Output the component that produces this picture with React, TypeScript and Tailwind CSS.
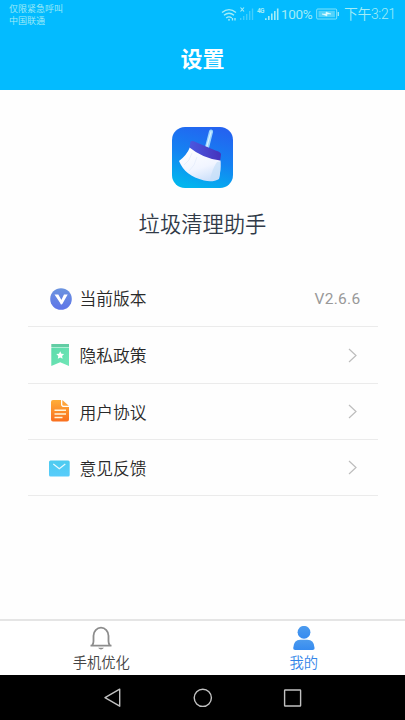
import React from "react";

const cjk = "font-['Roboto','Noto_Sans_CJK_SC',sans-serif]";

function StatusBar() {
  return (
    <div className="flex h-7 justify-between pl-[9px] pr-[9px] text-[#a4ecf6]">
      <div className="pt-[3px] text-[9px] font-[350] leading-[12px]">
        <p>仅限紧急呼叫</p>
        <p>中国联通</p>
      </div>
      <div className="flex h-7 items-center whitespace-nowrap">
        <svg width="59" height="18" viewBox="0 0 59 18" fill="none" stroke="currentColor">
          <path d="M1 7.5Q8 1.8 15 7.5M3 10.3Q8 6.2 13 10.3M5.2 13Q8 10.8 10.8 13" strokeWidth="1.4" />
          <path d="M7 14.8h2M11.5 13v2.5M14 13v2.5" strokeWidth="1.3" />
          <path d="M19.5 2.5l3.5 4M23 2.5l-3.5 4" strokeWidth="1.1" />
          <path d="M19.7 15v-2M22.7 15v-4M25.7 15V9M28.7 15V6M31.5 15V3.5" strokeWidth="1.4" opacity=".4" />
          <path d="M44.8 15v-1.8M47.8 15v-4M50.8 15V8.5M53.8 15V6M56.7 15V3.5" strokeWidth="1.6" />
          <text x="36" y="8" fontSize="6.5" fontWeight="700" fill="currentColor" stroke="none" textLength="7.5">4G</text>
        </svg>
        <span className="ml-[1px] w-[32px] text-[13.5px] tracking-[-0.3px]">100%</span>
        <svg className="ml-[3px]" width="24" height="12" viewBox="0 0 24 12" fill="none" stroke="currentColor">
          <rect x=".7" y="1" width="20" height="10" rx="1" opacity=".8" />
          <rect x="2.5" y="2.8" width="16.4" height="6.4" fill="currentColor" stroke="none" opacity=".5" />
          <path d="M22.3 4v4" strokeWidth="1.3" />
          <path d="M6 6h4V4l5 2h-4v2z" fill="#e0fcff" stroke="#e0fcff" strokeWidth=".5" />
        </svg>
        <span className="ml-[4px] w-[52px] text-[13.8px] font-[350] tracking-[-0.3px]">下午3:21</span>
      </div>
    </div>
  );
}

function BroomLogo() {
  return (
    <svg width="61" height="61" viewBox="0 0 61 61">
      <defs>
        <linearGradient id="logoBg" x1=".65" y1="0" x2=".35" y2="1">
          <stop stopColor="#2463f0" />
          <stop offset=".5" stopColor="#1482f2" />
          <stop offset="1" stopColor="#02b5ee" />
        </linearGradient>
        <linearGradient id="bristle" x1=".3" y1="0" x2=".7" y2="1">
          <stop stopColor="#ffffff" />
          <stop offset=".6" stopColor="#f1f5ff" />
          <stop offset="1" stopColor="#cbdffa" />
        </linearGradient>
        <linearGradient id="band">
          <stop stopColor="#4a58e0" />
          <stop offset="1" stopColor="#4633bb" />
        </linearGradient>
      </defs>
      <rect width="61" height="61" rx="13" fill="url(#logoBg)" />
      <path d="M37 4.2q.4-1.9 2.3-1.6t1.8 2.2L36.5 23l-4-1.2z" fill="#9bd5ff" />
      <path d="M38.6 4.2l1.2.2-4.8 16.8-1.2-.4z" fill="#d8f1ff" />
      <path d="M18 20Q15 28 7 34c4 10 12 16 25 19.5 6 1.5 11 .8 15-1.500q2-8 1.500-18.500z" fill="url(#bristle)" />
      <path d="M18.500 14.500q2-1.200 5 .5l20 8.500q5.500 1.500 5.500 4l-.8 6Q31 31.500 17.500 20.500z" fill="url(#band)" />
      <path d="M20 26q-2 8-8 12M25 30q-2 9-8 14" fill="none" stroke="#e3ebfb" strokeWidth=".7" />
      <path d="M45 35q-5 7-7 18 5 .6 9-1.500 2-8 1.500-17z" fill="#c6dff8" opacity=".7" />
    </svg>
  );
}

function VersionIcon() {
  return (
    <svg className="mt-px" width="22" height="22" viewBox="0 0 22 22">
      <defs>
        <linearGradient id="ver" x2="0" y2="1">
          <stop stopColor="#6b94df" />
          <stop offset="1" stopColor="#5e74e8" />
        </linearGradient>
      </defs>
      <circle cx="11" cy="11" r="10.8" fill="url(#ver)" />
      <path d="M4.500 6.500h3.800l3.300 5.800-.6 4zM14 6.500h3.700l-5.400 9.600q-.6.800-1.600.2l-.7-1.500z" fill="#fff" />
    </svg>
  );
}

function PrivacyIcon() {
  return (
    <svg width="22" height="24" viewBox="0 0 22 24">
      <defs>
        <linearGradient id="priv" x1="0" x2="1" y2="1">
          <stop stopColor="#5bdbab" />
          <stop offset="1" stopColor="#71e6b7" />
        </linearGradient>
      </defs>
      <path d="M1.300 1h17.700v3H1.300z" fill="#62cda4" />
      <path d="M1.300 4.400h17.700V23l-8.800-3.800L1.300 23z" fill="url(#priv)" />
      <path d="M10.200 8.300l1.200 2.400 2.700.4-2 1.900.5 2.700-2.400-1.300-2.400 1.300.5-2.700-2-1.900 2.700-.4z" fill="#fff" />
    </svg>
  );
}

function AgreementIcon() {
  return (
    <svg className="-mt-[2px]" width="22" height="24" viewBox="0 0 22 24">
      <defs>
        <linearGradient id="doc" x2="0" y2="1">
          <stop stopColor="#ffae38" />
          <stop offset="1" stopColor="#f96f1e" />
        </linearGradient>
      </defs>
      <path d="M3 1h8v4.200Q11 8 14 8h5v12.500a2 2 0 0 1-2 2H3a2 2 0 0 1-2-2V3a2 2 0 0 1 2-2z" fill="url(#doc)" />
      <path d="M12.300 1l6.500 5.800H14q-1.700 0-1.700-1.600z" fill="#ffa53c" />
      <path d="M4.500 11.300h11.500M4.500 14.900h11.500M4.500 18.500h8" stroke="#fff5d9" strokeWidth="1.500" />
    </svg>
  );
}

function FeedbackIcon() {
  return (
    <svg className="mt-px overflow-visible" width="22" height="22" viewBox="0 0 22 22">
      <defs>
        <linearGradient id="mail" x2="0" y2="1">
          <stop stopColor="#4dcbef" />
          <stop offset="1" stopColor="#58ccfb" />
        </linearGradient>
      </defs>
      <rect x="-1" y="3.500" width="20.700" height="16" rx="1.500" fill="url(#mail)" />
      <path d="M3.300 7l6 4.700L15.300 7" fill="none" stroke="#e8faff" strokeWidth="1.200" />
    </svg>
  );
}

const rows = [
  { label: "当前版本", icon: <VersionIcon />, value: "V2.6.6", height: "h-[57px]" },
  { label: "隐私政策", icon: <PrivacyIcon />, height: "h-[57px]" },
  { label: "用户协议", icon: <AgreementIcon />, height: "h-[56px]" },
  { label: "意见反馈", icon: <FeedbackIcon />, height: "h-[56px]" },
];

export default function App() {
  return (
    <div className={`flex h-[720px] w-[405px] flex-col overflow-hidden bg-[#fefefe] ${cjk}`}>
      <header className="h-[90px] shrink-0 bg-[#03bbff]">
        <StatusBar />
        <h1 className="mt-[16px] text-center text-[22px] font-bold leading-[32px] text-white">设置</h1>
      </header>

      <main className="flex flex-1 flex-col items-center">
        <div className="mt-[37px]">
          <BroomLogo />
        </div>
        <h2 className="mt-[21px] text-[21.3px] font-[350] leading-[32px] text-[#303a48]">垃圾清理助手</h2>
        <ul className="mt-[29px] w-[350px]">
          {rows.map((row) => (
            <li key={row.label} className={`flex items-center border-b border-[#ebebeb] pl-[22px] pr-[17px] ${row.height}`}>
              <span className="flex w-[30px]">{row.icon}</span>
              <span className="pt-[2px] text-[16.8px] font-[350] leading-6 text-[#292929]">{row.label}</span>
              {row.value ? (
                <span className="ml-auto pt-[3px] text-[15.5px] tracking-[0.3px] text-[#999999]">{row.value}</span>
              ) : (
                <svg className="ml-auto mr-[4px]" width="9" height="15" viewBox="0 0 9 15" fill="none" stroke="#bdbdbd" strokeWidth="1.2">
                  <path d="M1 1l7 6.5L1 14" />
                </svg>
              )}
            </li>
          ))}
        </ul>
      </main>

      <nav className="grid h-[56px] shrink-0 grid-cols-2 border-t-2 border-[#e5e5e5] bg-white text-[14.3px] font-[350] leading-[20px]">
        <div className="flex flex-col items-center pt-[5px] text-[#444444]">
          <svg width="24" height="26" viewBox="0 0 24 26" fill="none" stroke="#8c8c8c" strokeWidth="1.8">
            <path d="M1.500 19.700h21M3 19.500q1.500-1.600 1.500-4.300V9.700a7.500 8 0 0 1 15 0v5.500q0 2.700 1.500 4.300" />
            <path d="M9 21.800h6q-3 3.200-6 0z" fill="#8c8c8c" stroke="none" />
          </svg>
          <span className="mt-px">手机优化</span>
        </div>
        <div className="flex flex-col items-center pt-[5px] text-[#3385e8]">
          <svg width="24" height="26" viewBox="0 0 24 26">
            <defs>
              <linearGradient id="user" x2="0" y2="1">
                <stop stopColor="#4c9bee" />
                <stop offset="1" stopColor="#368bf0" />
              </linearGradient>
            </defs>
            <circle cx="12" cy="6.3" r="6.400" fill="url(#user)" />
            <path d="M1.200 22q.6-8.200 7-8.200h7.200q6.600 0 7.200 8.200.1 2-2 2H3.200q-2.100 0-2-2z" fill="url(#user)" />
          </svg>
          <span className="mt-px">我的</span>
        </div>
      </nav>

      <footer className="flex h-[45px] shrink-0 items-center justify-between bg-black px-[103px]">
        <svg width="20" height="20" viewBox="0 0 20 20" fill="none" stroke="#c2c2c2" strokeWidth="1.4" strokeLinejoin="round">
          <path d="M16.700 1.200v17L2 9.700z" />
        </svg>
        <svg width="20" height="20" viewBox="0 0 20 20" fill="none" stroke="#c2c2c2" strokeWidth="1.4">
          <circle cx="9.800" cy="9.800" r="8.600" />
        </svg>
        <svg width="20" height="20" viewBox="0 0 20 20" fill="none" stroke="#c2c2c2" strokeWidth="1.4">
          <rect x="2.600" y="2" width="16" height="16" rx=".5" />
        </svg>
      </footer>
    </div>
  );
}
